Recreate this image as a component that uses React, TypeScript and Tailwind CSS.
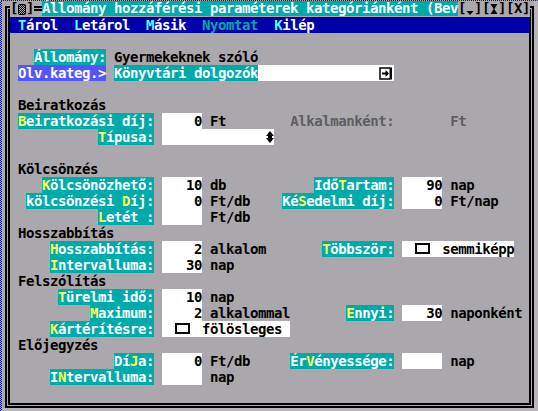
import React from "react";

const R = ({ children }: { children?: React.ReactNode }) => (
  <div className="flex h-[16px] leading-[16px] whitespace-pre">{children}</div>
);

const Sp = ({ n }: { n: number }) => <span className="whitespace-pre">{" ".repeat(n)}</span>;

const Lbl = ({ t, hot }: { t: string; hot?: number }) => (
  <span className="bg-[#00aaaa] text-white whitespace-pre">
    {hot === undefined ? (
      t
    ) : (
      <>
        {t.slice(0, hot)}
        <span className="text-[#ffff55]">{t[hot]}</span>
        {t.slice(hot + 1)}
      </>
    )}
  </span>
);

const Val = ({ v }: { v: string }) => (
  <span className="bg-white text-black whitespace-pre">{v.padStart(5, " ")}</span>
);

const Tx = ({ t }: { t: string }) => <span className="whitespace-pre">{t}</span>;

const Dim = ({ t }: { t: string }) => <span className="whitespace-pre text-[#5e5e5e]">{t}</span>;

const Check = ({ t, w }: { t: string; w: "a" | "b" }) => (
  <span className={w === "a" ? "bg-white w-[112px] flex items-start" : "bg-white w-[128px] flex items-start"}>
    <span className="ml-[13px] mt-[2px] w-[15px] h-[11px] border-2 border-black" />
    <span className="ml-[12px] whitespace-pre">{t}</span>
  </span>
);

const Gray = "bg-[#aaa8ac]";

export default function App() {
  return (
    <div className="w-[538px] h-[411px] bg-[#b6b4b8] overflow-hidden font-['DejaVu_Sans_Mono',monospace] text-[14px] tracking-[-0.4287px] font-bold text-black">
      <div className="h-[1px] w-full bg-[repeating-conic-gradient(#1414a0_0_25%,#aaa8ac_0_50%)] bg-[length:2px_2px]" />
      <div className="flex">
        <div className="w-[2px] h-[410px] bg-[repeating-conic-gradient(#1414a0_0_25%,#aaa8ac_0_50%)] bg-[length:2px_2px]" />
        <div className="w-[532px] h-[407px] bg-[#aaa8ac] pl-[3px] pt-[5px]">
          <div className="w-[529px] h-[402px] border-[5px] border-double border-black">
            <div className="flex flex-col">
              {/* Title row */}
              <div className="flex h-[16px] -mt-[10px] -mr-[1px] leading-[15px] whitespace-pre">
                <span className={Gray + " h-[16px]"}>[</span>
                <span className={Gray + " w-[8px] h-[16px]"}>
                  <svg width="8" height="16" viewBox="0 0 8 16">
                    <defs>
                      <pattern id="chk" width="2" height="2" patternUnits="userSpaceOnUse">
                        <rect width="1" height="1" fill="#000" />
                        <rect x="1" y="1" width="1" height="1" fill="#000" />
                      </pattern>
                    </defs>
                    <rect x="0.5" y="3.5" width="7" height="10" rx="1" fill="url(#chk)" stroke="#000" />
                  </svg>
                </span>
                <span className={Gray + " h-[16px]"}>]</span>
                <span className="w-[8px]" />
                <span className="bg-[#00aaaa] text-white h-[15px]">
                  Állomány hozzáférési paraméterek kategóriánként (Bev
                </span>
                <span className={Gray + " flex h-[16px]"}>
                  <span>[</span>
                  <span className="w-[8px]">
                    <svg width="8" height="16" viewBox="0 0 8 16">
                      <polygon points="0.5,10 7.5,10 4,14" fill="#000" />
                    </svg>
                  </span>
                  <span>]</span>
                  <span>[</span>
                  <span className="w-[8px]">
                    <svg width="8" height="16" viewBox="0 0 8 16">
                      <polygon points="0.5,3 7.5,3 4,8.5" fill="#000" />
                      <polygon points="4,7.5 0.5,13 7.5,13" fill="#000" />
                    </svg>
                  </span>
                  <span>]</span>
                  <span>[X]</span>
                </span>
              </div>
              {/* Menu row */}
              <div className="h-[16px] leading-[16px] -mr-[1px] bg-[#0000aa] text-white whitespace-pre">
                {" "}
                <span className="text-[#55ffff]">T</span>
                {"árol  "}
                <span className="text-[#55ffff]">L</span>
                {"etárol  "}
                <span className="text-[#55ffff]">M</span>
                {"ásik  "}
                <span className="text-[#00aaaa]">Nyomtat</span>
                {"  "}
                <span className="text-[#55ffff]">K</span>
                {"ilép"}
              </div>
              <R />
              <R>
                <Sp n={3} />
                <Lbl t="Állomány:" />
                <Sp n={1} />
                <Tx t="Gyermekeknek szóló" />
              </R>
              <R>
                <Sp n={1} />
                <span className="bg-[#5555ff] text-white whitespace-pre">Olv.kateg.&gt;</span>
                <Sp n={1} />
                <span className="bg-[#00aaaa] text-white whitespace-pre">Könyvtári dolgozók</span>
                <span className="bg-white w-[136px] flex justify-end items-start">
                  <svg className="mt-[2px] mr-[1px]" width="14" height="13" viewBox="0 0 14 13">
                    <path d="M11 1 H1 V12 H11" fill="none" stroke="#000" strokeWidth="1.5" />
                    <rect x="10.5" y="0.5" width="2.5" height="12" fill="#000" />
                    <path d="M3 6.5 H8" stroke="#000" strokeWidth="2" />
                    <polygon points="6.5,3 10,6.5 6.5,10" fill="#000" />
                  </svg>
                </span>
              </R>
              <R />
              <R>
                <Sp n={1} />
                <Tx t="Beiratkozás" />
              </R>
              <R>
                <Sp n={1} />
                <Lbl t="Beiratkozási díj:" hot={0} />
                <Sp n={1} />
                <Val v="0" />
                <Sp n={1} />
                <Tx t="Ft" />
                <Sp n={8} />
                <Dim t="Alkalmanként:" />
                <Sp n={7} />
                <Dim t="Ft" />
              </R>
              <R>
                <Sp n={11} />
                <Lbl t="Típusa:" hot={0} />
                <Sp n={1} />
                <span className="bg-white w-[112px] flex justify-end">
                  <svg width="8" height="16" viewBox="0 0 8 16">
                    <polygon points="4,2 8,7 0,7" fill="#000" />
                    <rect x="2" y="6.5" width="4" height="3" fill="#000" />
                    <polygon points="0,9 8,9 4,14" fill="#000" />
                  </svg>
                </span>
              </R>
              <R />
              <R>
                <Sp n={1} />
                <Tx t="Kölcsönzés" />
              </R>
              <R>
                <Sp n={4} />
                <Lbl t="Kölcsönözhető:" hot={0} />
                <Sp n={1} />
                <Val v="10" />
                <Sp n={1} />
                <Tx t="db" />
                <Sp n={11} />
                <Lbl t="IdőTartam:" hot={3} />
                <Sp n={1} />
                <Val v="90" />
                <Sp n={1} />
                <Tx t="nap" />
              </R>
              <R>
                <Sp n={2} />
                <Lbl t="kölcsönzési Díj:" hot={12} />
                <Sp n={1} />
                <Val v="0" />
                <Sp n={1} />
                <Tx t="Ft/db" />
                <Sp n={4} />
                <Lbl t="KéSedelmi díj:" hot={2} />
                <Sp n={1} />
                <Val v="0" />
                <Sp n={1} />
                <Tx t="Ft/nap" />
              </R>
              <R>
                <Sp n={11} />
                <Lbl t="Letét :" hot={0} />
                <Sp n={1} />
                <Val v="" />
                <Sp n={1} />
                <Tx t="Ft/db" />
              </R>
              <R>
                <Sp n={1} />
                <Tx t="Hosszabbítás" />
              </R>
              <R>
                <Sp n={5} />
                <Lbl t="Hosszabbítás:" hot={0} />
                <Sp n={1} />
                <Val v="2" />
                <Sp n={1} />
                <Tx t="alkalom" />
                <Sp n={7} />
                <Lbl t="Többször:" hot={0} />
                <Sp n={1} />
                <Check t="semmiképp" w="a" />
              </R>
              <R>
                <Sp n={5} />
                <Lbl t="Intervalluma:" hot={0} />
                <Sp n={1} />
                <Val v="30" />
                <Sp n={1} />
                <Tx t="nap" />
              </R>
              <R>
                <Sp n={1} />
                <Tx t="Felszólítás" />
              </R>
              <R>
                <Sp n={6} />
                <Lbl t="Türelmi idő:" hot={0} />
                <Sp n={1} />
                <Val v="10" />
                <Sp n={1} />
                <Tx t="nap" />
              </R>
              <R>
                <Sp n={10} />
                <Lbl t="Maximum:" hot={0} />
                <Sp n={1} />
                <Val v="2" />
                <Sp n={1} />
                <Tx t="alkalommal" />
                <Sp n={7} />
                <Lbl t="Ennyi:" hot={0} />
                <Sp n={1} />
                <Val v="30" />
                <Sp n={1} />
                <Tx t="naponként" />
              </R>
              <R>
                <Sp n={5} />
                <Lbl t="Kártérítésre:" hot={0} />
                <Sp n={1} />
                <Check t="fölösleges" w="b" />
              </R>
              <R>
                <Sp n={1} />
                <Tx t="Előjegyzés" />
              </R>
              <R>
                <Sp n={13} />
                <Lbl t="DíJa:" hot={2} />
                <Sp n={1} />
                <Val v="0" />
                <Sp n={1} />
                <Tx t="Ft/db" />
                <Sp n={5} />
                <Lbl t="ÉrVényessége:" hot={2} />
                <Sp n={1} />
                <Val v="" />
                <Sp n={1} />
                <Tx t="nap" />
              </R>
              <R>
                <Sp n={5} />
                <Lbl t="INtervalluma:" hot={1} />
                <Sp n={1} />
                <Val v="" />
                <Sp n={1} />
                <Tx t="nap" />
              </R>
              <R />
            </div>
          </div>
        </div>
      </div>
    </div>
  );
}
